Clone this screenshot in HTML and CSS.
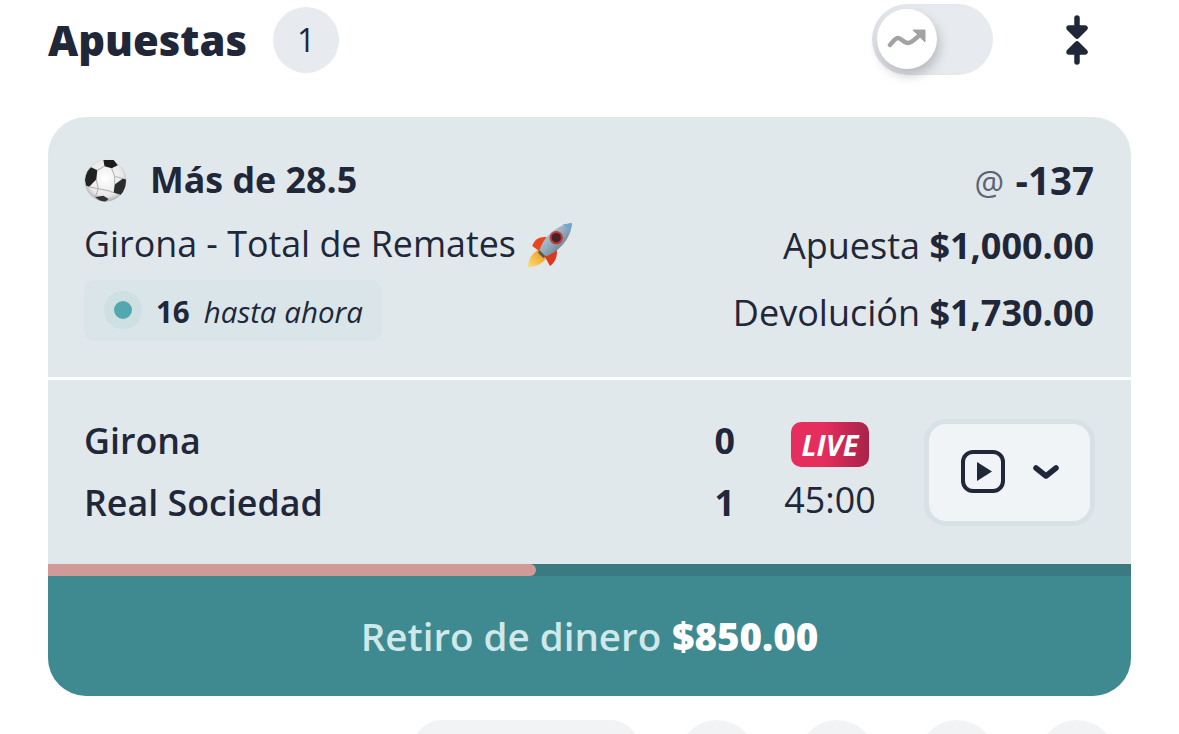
FILE: index.html
```html
<!DOCTYPE html>
<html lang="es">
<head>
    <meta charset="UTF-8">
    <title>Apuestas</title>
    <link rel="stylesheet" href="styles.css">
</head>
<body>
<div class="head">
    <h1 class="title">Apuestas</h1>
    <span class="count">1</span>
    <div class="toggle">
        <span class="knob">
            <svg width="40" height="20" viewBox="0 0 40 20"><path d="M3 16 C6 13 8 9 11 9 C14 9 17 14 21 14 C25 14 29 9 34 5" fill="none" stroke="#a3a3a3" stroke-width="4.500" stroke-linecap="round"/><path d="M26 1 H38 V13 Z" fill="#a3a3a3" stroke="#a3a3a3" stroke-linejoin="round"/></svg>
        </span>
    </div>
    <svg class="collapse" width="24" height="50" viewBox="0 0 24 50"><path d="M12 3 V20 M4 13 L12 21 L20 13 Z M12 47 V30 M4 37 L12 29 L20 37 Z" fill="#1f2739" stroke="#1f2739" stroke-width="5.500" stroke-linecap="round" stroke-linejoin="round"/></svg>
</div>

<div class="card">
    <div class="bet">
        <div class="bet-left">
            <div class="pick">
                <svg class="ball" width="43" height="43" viewBox="0 0 42 42">
                    <defs><radialGradient id="bg" cx="50%" cy="45%" r="60%"><stop offset="0" stop-color="#fff"/><stop offset=".7" stop-color="#e8e8e8"/><stop offset="1" stop-color="#9a9a9a"/></radialGradient></defs>
                    <circle cx="21" cy="21" r="20.500" fill="url(#bg)"/>
                    <path d="M19 1 L29 1 L33 6 L27 9 L20 7 Z" fill="#1c1c1c"/>
                    <path d="M1 20 C2 14 4 10 7 8 L13 11 L12 20 L5 27 L2 26 Z" fill="#222"/>
                    <path d="M30 25 L38 19 L41 20 C41 27 39 31 36 35 L29 33 Z" fill="#2c2c2c"/>
                    <path d="M11 37 L19 36 L24 39 L21 41.500 C17 41.500 14 40 11 37 Z" fill="#333"/>
                    <path d="M13 11 L20 7 M27 9 L30 17 L38 19 M30 25 L30 17 M12 20 L14 29 L24 31 M29 33 L24 31 M14 29 L5 27 M14 29 L11 37" fill="none" stroke="#b0b0b0" stroke-width="1"/>
                </svg>
                <span class="pick-name">Más de 28.5</span>
            </div>
            <div class="market">Girona - Total de Remates
                <svg class="rocket" width="46" height="46" viewBox="2 1 44 44">
                    <defs>
                        <linearGradient id="rb" x1="0" y1="0" x2="1" y2="1"><stop offset="0" stop-color="#d5e6f0"/><stop offset=".5" stop-color="#8fa9bb"/><stop offset="1" stop-color="#4d5a6e"/></linearGradient>
                        <linearGradient id="rf" x1="0" y1="1" x2="1" y2="0"><stop offset="0" stop-color="#f8e26a"/><stop offset="1" stop-color="#ee8a1e"/></linearGradient>
                    </defs>
                    <path d="M3 44 C3 36 8 29 15 27 L21 33 C20 39 12 44 3 44 Z" fill="url(#rf)"/>
                    <path d="M7 24 C9 17 16 14 23 16 L14 29 Z" fill="#e8481f"/>
                    <path d="M24 43 C29 40 32 33 30 25 L19 34 Z" fill="#d93a1c"/>
                    <path d="M14 28 C18 15 30 4 45 2 C44 17 33 29 20 34 Z" fill="url(#rb)"/>
                    <path d="M36 3.500 C39 3 42 2.500 45 2 C45 5 44 8 43 11 C41 7 39 5 36 3.500 Z" fill="#6fa8cf"/>
                    <circle cx="30" cy="16" r="5.500" fill="#4a2126" stroke="#c43b3b" stroke-width="2"/>
                    <path d="M14 28 L20 34 L17.500 35.500 L12.500 30.500 Z" fill="#5a5f3a"/>
                </svg>
            </div>
            <div class="progress-tag">
                <span class="dot"></span>
                <b>16</b>
                <i>hasta ahora</i>
            </div>
        </div>
        <div class="bet-right">
            <div class="odds"><span class="at">@</span> <b>-137</b></div>
            <div class="amount">Apuesta <b>$1,000.00</b></div>
            <div class="amount">Devolución <b>$1,730.00</b></div>
        </div>
    </div>
    <div class="match">
        <div class="teams">
            <div class="team"><span>Girona</span><b>0</b></div>
            <div class="team"><span>Real Sociedad</span><b>1</b></div>
        </div>
        <div class="status">
            <span class="live">LIVE</span>
            <span class="clock">45:00</span>
        </div>
        <div class="stream">
            <svg width="46" height="44" viewBox="0 0 46 44"><rect x="2" y="2" width="40" height="39" rx="10" fill="none" stroke="#1f2739" stroke-width="4"/><path d="M16 12 L31 21.500 L16 31 Z" fill="#1f2739"/></svg>
            <svg width="28" height="16" viewBox="0 0 28 16"><path d="M4 4 L14 12 L24 4" fill="none" stroke="#1f2739" stroke-width="5.500" stroke-linecap="round" stroke-linejoin="round"/></svg>
        </div>
    </div>
    <div class="track"><div class="fill"></div></div>
    <div class="cashout"><span>Retiro de dinero</span><b>$850.00</b></div>
</div>

<div class="foot">
    <span class="foot-pill"></span>
    <span class="foot-dot"></span>
    <span class="foot-dot"></span>
    <span class="foot-dot"></span>
    <span class="foot-dot"></span>
</div>
</body>
</html>
```

FILE: styles.css
```css
html, body {
    margin: 0;
    height: 734px;
    overflow: hidden;
    background: #fff;
}
body {
    padding: 0 48px;
    font-family: "Open Sans", "Noto Sans", sans-serif;
    color: #1f2739;
}
.head {
    height: 117px;
    padding: 2px 0 40px;
    box-sizing: border-box;
    display: flex;
    align-items: center;
}
.title {
    margin: 1px 0 0;
    font-size: 41.700px;
    font-weight: 800;
    line-height: 1;
}
.count {
    width: 66px;
    height: 66px;
    margin-left: 26px;
    border-radius: 50%;
    background: #e7eaef;
    display: flex;
    align-items: center;
    justify-content: center;
    font-size: 32px;
}
.toggle {
    width: 121px;
    height: 71px;
    margin-left: auto;
    margin-right: 72px;
    border-radius: 36px;
    background: #e7eaef;
    padding: 5px;
    box-sizing: border-box;
    box-shadow: inset 3px 0 4px rgba(0,0,0,.04);
}
.knob {
    width: 60px;
    height: 60px;
    border-radius: 50%;
    background: #fff;
    display: flex;
    align-items: center;
    justify-content: center;
    box-shadow: 2px 6px 12px rgba(0,0,0,.22);
}
.collapse {
    margin-right: 42px;
}
.card {
    height: 579px;
    border-radius: 38px;
    overflow: hidden;
    background: #e1e8ec;
    display: flex;
    flex-direction: column;
}
.bet {
    height: 260px;
    padding: 0 37px 0 36px;
    display: flex;
    justify-content: space-between;
    flex-shrink: 0;
}
.pick {
    display: flex;
    align-items: center;
    height: 43px;
    margin-top: 42px;
}
.pick-name {
    margin: -3px 0 0 23px;
    font-size: 35.800px;
    font-weight: 700;
}
.market {
    display: flex;
    align-items: center;
    font-size: 35.800px;
    height: 48px;
    margin-top: 17px;
    gap: 11px;
}
.rocket {
    margin-top: 4px;
}
.progress-tag {
    display: inline-flex;
    align-items: center;
    height: 61px;
    width: 298px;
    box-sizing: border-box;
    margin-top: 13px;
    padding: 2px 0 0 20px;
    border-radius: 10px;
    background: #d9e5e8;
    font-size: 29.500px;
}
.dot {
    width: 18px;
    height: 18px;
    border: 10px solid #cfe0e2;
    border-radius: 50%;
    background: #52a8ae;
    margin: -3px 14px 0 0;
}
.progress-tag i {
    margin-left: 14px;
}
.bet-right {
    text-align: right;
    font-size: 36px;
    padding-top: 38px;
}
.odds {
    height: 50px;
    line-height: 50px;
    margin-bottom: 7px;
}
.odds b {
    font-size: 38.500px;
    margin-left: 2px;
}
.at {
    font-size: 33px;
    color: #5b6472;
}
.amount {
    height: 67px;
    line-height: 67px;
}
.match {
    height: 184px;
    margin-top: 3px;
    padding: 0 36px;
    display: flex;
    align-items: center;
    box-shadow: 0 -3px 0 #fff;
    flex-shrink: 0;
}
.teams {
    width: 651px;
    padding-bottom: 2px;
    font-size: 35.800px;
    font-weight: 600;
}
.team {
    display: flex;
    justify-content: space-between;
    height: 62px;
    line-height: 62px;
}
.team b {
    font-weight: 700;
}
.status {
    width: 140px;
    margin-left: 25px;
    padding-bottom: 2px;
    display: flex;
    flex-direction: column;
    align-items: center;
    gap: 10px;
}
.live {
    width: 78px;
    height: 45px;
    border-radius: 10px;
    background: linear-gradient(90deg, #e62e5e 40%, #a8234a);
    color: #fff;
    font-size: 29px;
    font-weight: 700;
    font-style: italic;
    line-height: 45px;
    text-align: center;
}
.clock {
    font-size: 35.800px;
    line-height: 44px;
}
.stream {
    width: 159px;
    height: 97px;
    margin-left: auto;
    padding-left: 2px;
    border: 5px solid #d8e1e6;
    border-radius: 22px;
    background: #f0f4f6;
    display: flex;
    align-items: center;
    justify-content: center;
    gap: 25px;
}
.track {
    height: 12px;
    background: #3a7a80;
    flex-shrink: 0;
}
.fill {
    width: 488px;
    height: 12px;
    border-radius: 0 6px 6px 0;
    background: #d09a98;
}
.cashout {
    flex: 1;
    background: #3f8a91;
    color: #cfe8ea;
    font-size: 38.500px;
    font-weight: 600;
    display: flex;
    align-items: center;
    justify-content: center;
    gap: 11px;
}
.cashout b {
    color: #fff;
}
.foot {
    display: flex;
    height: 14px;
    overflow: hidden;
    margin-top: 24px;
    padding-left: 364px;
    gap: 42px;
}
.foot-pill {
    width: 228px;
    height: 60px;
    margin-right: -4px;
    border-radius: 30px;
    background: #f2f3f5;
}
.foot-dot {
    width: 78px;
    height: 78px;
    flex-shrink: 0;
    border-radius: 50%;
    background: #f2f3f5;
}
```
